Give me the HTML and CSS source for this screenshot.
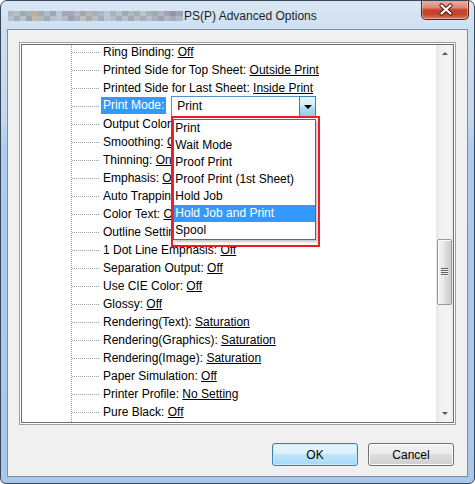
FILE: index.html
```html
<!DOCTYPE html>
<html lang="en">
<head>
    <meta charset="UTF-8">
    <title>PS(P) Advanced Options</title>
    <link rel="stylesheet" href="styles.css">
</head>
<body>
<div class="window">
    <div class="titlebar">
        <svg class="blur" width="175" height="10" viewBox="0 0 175 10" shape-rendering="crispEdges">
            <rect x="0" y="0" width="175" height="10" fill="#bcc7d3"/>
            <rect x="0" y="0" width="6" height="5" fill="#a9b6c6"/><rect x="6" y="0" width="6" height="5" fill="#b7bfc5"/><rect x="12" y="0" width="6" height="5" fill="#9ea9b4"/><rect x="18" y="0" width="6" height="5" fill="#aab2b8"/><rect x="24" y="0" width="6" height="5" fill="#b8b29c"/><rect x="30" y="0" width="6" height="5" fill="#a3acb6"/><rect x="36" y="0" width="6" height="5" fill="#b4bcc6"/><rect x="42" y="0" width="6" height="5" fill="#9ba6b2"/>
            <rect x="54" y="0" width="6" height="5" fill="#a2a7b4"/><rect x="60" y="0" width="6" height="5" fill="#a9a5b8"/><rect x="66" y="0" width="6" height="5" fill="#b3b9c2"/><rect x="72" y="0" width="6" height="5" fill="#9fa9b1"/><rect x="78" y="0" width="6" height="5" fill="#b5bab0"/><rect x="84" y="0" width="6" height="5" fill="#a6afba"/><rect x="90" y="0" width="6" height="5" fill="#b0b7c0"/>
            <rect x="102" y="0" width="6" height="5" fill="#a7b1bd"/><rect x="108" y="0" width="6" height="5" fill="#b9c0c7"/><rect x="114" y="0" width="6" height="5" fill="#9ca8b5"/><rect x="120" y="0" width="6" height="5" fill="#b3b9c0"/><rect x="126" y="0" width="6" height="5" fill="#a4adb9"/><rect x="132" y="0" width="6" height="5" fill="#bcc3ca"/><rect x="138" y="0" width="6" height="5" fill="#a8b0bc"/><rect x="144" y="0" width="6" height="5" fill="#9fa7b6"/><rect x="150" y="0" width="6" height="5" fill="#aeb5c2"/><rect x="156" y="0" width="6" height="5" fill="#a1a4b2"/><rect x="162" y="0" width="6" height="5" fill="#8f96a6"/><rect x="168" y="0" width="7" height="5" fill="#9ba3b2"/>
            <rect x="0" y="5" width="6" height="5" fill="#b4c0cd"/><rect x="6" y="5" width="6" height="5" fill="#a2adb8"/><rect x="12" y="5" width="6" height="5" fill="#b9c2c9"/><rect x="18" y="5" width="6" height="5" fill="#9aa3ad"/><rect x="24" y="5" width="6" height="5" fill="#c2bba4"/><rect x="30" y="5" width="6" height="5" fill="#b1b9c3"/><rect x="36" y="5" width="6" height="5" fill="#a1abb7"/><rect x="42" y="5" width="6" height="5" fill="#b8c0c9"/>
            <rect x="54" y="5" width="6" height="5" fill="#b4b9c4"/><rect x="60" y="5" width="6" height="5" fill="#9c9fb1"/><rect x="66" y="5" width="6" height="5" fill="#a6aeb8"/><rect x="72" y="5" width="6" height="5" fill="#b9c0c6"/><rect x="78" y="5" width="6" height="5" fill="#a8ae9f"/><rect x="84" y="5" width="6" height="5" fill="#b7bec7"/><rect x="90" y="5" width="6" height="5" fill="#a2abb6"/>
            <rect x="102" y="5" width="6" height="5" fill="#b6bfc9"/><rect x="108" y="5" width="6" height="5" fill="#a3adb9"/><rect x="114" y="5" width="6" height="5" fill="#b7bfc8"/><rect x="120" y="5" width="6" height="5" fill="#9fa8b3"/><rect x="126" y="5" width="6" height="5" fill="#b5bcc5"/><rect x="132" y="5" width="6" height="5" fill="#a5aeb9"/><rect x="138" y="5" width="6" height="5" fill="#b9bfc9"/><rect x="144" y="5" width="6" height="5" fill="#abb2bf"/><rect x="150" y="5" width="6" height="5" fill="#9da3b3"/><rect x="156" y="5" width="6" height="5" fill="#b1b6c2"/><rect x="162" y="5" width="6" height="5" fill="#a4aab8"/><rect x="168" y="5" width="7" height="5" fill="#b0b6c3"/>
        </svg>
        <span class="title">PS(P) Advanced Options</span>
        <div class="close">
            <svg width="48" height="19" viewBox="0 0 48 19">
                <path d="M19.5 5.5 L28.5 13.5 M28.5 5.5 L19.5 13.5" stroke="#4b1b12" stroke-width="4.2" stroke-linecap="round"/>
                <path d="M19.5 5.5 L28.5 13.5 M28.5 5.5 L19.5 13.5" stroke="#ffffff" stroke-width="2.2" stroke-linecap="round"/>
            </svg>
        </div>
    </div>
    <div class="client">
        <div class="treebox">
            <div class="tree-inner">
                <ul class="tree">
                    <li><span class="lbl">Ring Binding: <u>Off</u></span></li>
                    <li><span class="lbl">Printed Side for Top Sheet: <u>Outside Print</u></span></li>
                    <li><span class="lbl">Printed Side for Last Sheet: <u>Inside Print</u></span></li>
                    <li class="current">
                        <span class="lbl sel">Print Mode:</span>
                        <div class="combo">
                            <span class="combo-text">Print</span>
                            <div class="drop"><span class="arrow"></span></div>
                            <ul class="listbox">
                                <li>Print</li>
                                <li>Wait Mode</li>
                                <li>Proof Print</li>
                                <li>Proof Print (1st Sheet)</li>
                                <li>Hold Job</li>
                                <li class="hot">Hold Job and Print</li>
                                <li>Spool</li>
                            </ul>
                            <div class="mark"></div>
                        </div>
                    </li>
                    <li><span class="lbl">Output Color: <u>Auto Color</u></span></li>
                    <li><span class="lbl">Smoothing: <u>Off</u></span></li>
                    <li><span class="lbl">Thinning: <u>On</u></span></li>
                    <li><span class="lbl">Emphasis: <u>On</u></span></li>
                    <li><span class="lbl">Auto Trapping: <u>On</u></span></li>
                    <li><span class="lbl">Color Text: <u>Off</u></span></li>
                    <li><span class="lbl">Outline Setting: <u>Off</u></span></li>
                    <li><span class="lbl">1 Dot Line Emphasis: <u>Off</u></span></li>
                    <li><span class="lbl">Separation Output: <u>Off</u></span></li>
                    <li><span class="lbl">Use CIE Color: <u>Off</u></span></li>
                    <li><span class="lbl">Glossy: <u>Off</u></span></li>
                    <li><span class="lbl">Rendering(Text): <u>Saturation</u></span></li>
                    <li><span class="lbl">Rendering(Graphics): <u>Saturation</u></span></li>
                    <li><span class="lbl">Rendering(Image): <u>Saturation</u></span></li>
                    <li><span class="lbl">Paper Simulation: <u>Off</u></span></li>
                    <li><span class="lbl">Printer Profile: <u>No Setting</u></span></li>
                    <li><span class="lbl">Pure Black: <u>Off</u></span></li>
                </ul>
                <div class="scrollbar">
                    <div class="sb-btn"><span class="sb-up"></span></div>
                    <div class="sb-track">
                        <div class="thumb"><span class="grip"></span></div>
                    </div>
                    <div class="sb-btn"><span class="sb-down"></span></div>
                </div>
            </div>
        </div>
        <div class="buttons">
            <button class="btn ok">OK</button>
            <button class="btn">Cancel</button>
        </div>
    </div>
</div>
</body>
</html>
```

FILE: styles.css
```css
*{
    margin: 0;
    padding: 0;
    box-sizing: border-box;
    font-family: 'Liberation Sans', Arial, sans-serif;
}
body {
    width: 475px;
    height: 484px;
    background: #fff;
    font-size: 12px;
    color: #000;
}
.window {
    width: 475px;
    height: 484px;
    border: 1px solid #37475a;
    border-radius: 7px 7px 6px 6px;
    background: linear-gradient(to bottom, #dbe7f4 0, #cddff1 30px, #c3d8ee 120px, #aecbea 150px, #a9c7e8 100%);
    display: flex;
    flex-direction: column;
    overflow: hidden;
}
.titlebar {
    height: 28px;
    display: flex;
    align-items: center;
    flex-shrink: 0;
}
.blur {
    margin-left: 7px;
    margin-top: 1px;
    flex-shrink: 0;
}
.title {
    font-size: 12px;
    color: #1e1e1e;
    margin-left: 1px;
    margin-top: 1px;
}
.close {
    align-self: flex-start;
    margin-left: auto;
    margin-right: 5px;
    margin-top: -1px;
    width: 48px;
    height: 20px;
    border: 1px solid #5f2014;
    border-top: none;
    border-radius: 0 0 5px 5px;
    background: linear-gradient(to bottom, #eab3a6 0, #dc8a76 40%, #c5432b 52%, #c3442b 75%, #dc7f5f 100%);
    box-shadow: inset 0 0 0 1px rgba(255,255,255,0.35);
}
.close svg {
    display: block;
}
.client {
    margin: 0 6px;
    height: 448px;
    border: 1px solid #7b8ea5;
    background: #f0f0f0;
    padding: 12px 0 0 11px;
    display: flex;
    flex-direction: column;
}
.treebox {
    width: 437px;
    height: 383px;
    border: 1px solid #a0a0a0;
    padding: 1px;
    background: #fff;
}
.tree-inner {
    height: 100%;
    border: 1px solid #6e6e6e;
    display: flex;
    overflow: hidden;
}
.tree {
    list-style: none;
    flex: 1;
    margin-top: -2px;
    background-image: linear-gradient(to bottom, #a0a0a0 50%, transparent 50%);
    background-size: 1px 2px;
    background-position: 49px 0;
    background-repeat: repeat-y;
}
.tree > li {
    height: 18px;
    display: flex;
    align-items: center;
    padding-left: 50px;
    white-space: nowrap;
}
.tree > li::before {
    content: "";
    width: 27px;
    height: 1px;
    margin-right: 2px;
    flex-shrink: 0;
    background-image: linear-gradient(to right, #a0a0a0 50%, transparent 50%);
    background-size: 2px 1px;
}
.lbl {
    padding: 0 2px;
    line-height: 17px;
}
.lbl u {
    text-underline-offset: 1px;
}
.tree > li.current {
    align-items: flex-start;
}
.tree > li.current::before {
    margin-top: 9px;
}
.sel {
    background: #3399ff;
    color: #fff;
    height: 17px;
}
.combo {
    position: relative;
    margin-left: 5px;
    margin-top: -1px;
    width: 145px;
    height: 21px;
    border: 1px solid #5d8fc4;
    background: #fff;
    padding-left: 5px;
    line-height: 19px;
}
.drop {
    position: absolute;
    right: -1px;
    top: -1px;
    bottom: -1px;
    width: 17px;
    border: 1px solid #3c7fb1;
    background: linear-gradient(to bottom, #e6f5fd 0, #d3eefc 45%, #b0ddf8 55%, #8fcbee 100%);
    display: flex;
    align-items: center;
    justify-content: center;
}
.arrow {
    width: 0;
    height: 0;
    border-left: 4px solid transparent;
    border-right: 4px solid transparent;
    border-top: 4px solid #000;
    margin-top: 1px;
}
.listbox {
    position: absolute;
    left: 1px;
    top: 22px;
    width: 143px;
    list-style: none;
    background: #fff;
    border: 1px solid #646464;
    box-shadow: 2px 2px 2px rgba(0,0,0,0.22);
    z-index: 2;
}
.listbox li {
    height: 17px;
    line-height: 17px;
    padding-left: 1px;
    white-space: nowrap;
}
.listbox li.hot {
    background: #3399ff;
    color: #fff;
}
.mark {
    position: absolute;
    left: -1px;
    top: 19px;
    width: 149px;
    height: 131px;
    border: 2px solid #ee1c25;
    z-index: 3;
    pointer-events: none;
}
.scrollbar {
    width: 17px;
    flex-shrink: 0;
    display: flex;
    flex-direction: column;
    background: linear-gradient(to right, #e6e6e6 0, #f0f0f0 20%, #f4f4f4 80%, #e9e9e9 100%);
}
.sb-btn {
    height: 17px;
    display: flex;
    align-items: center;
    justify-content: center;
}
.sb-up {
    width: 0;
    height: 0;
    border-left: 3px solid transparent;
    border-right: 3px solid transparent;
    border-bottom: 3px solid #5a5a5a;
}
.sb-down {
    width: 0;
    height: 0;
    border-left: 3px solid transparent;
    border-right: 3px solid transparent;
    border-top: 3px solid #5a5a5a;
}
.sb-track {
    flex: 1;
    padding: 177px 1px 0 1px;
}
.thumb {
    height: 66px;
    border: 1px solid #979797;
    border-radius: 2px;
    background: linear-gradient(to right, #f4f4f4 0, #e9e9e9 45%, #dcdcdc 55%, #cdcdcd 100%);
    box-shadow: inset 1px 1px 0 #fcfcfc;
    display: flex;
    align-items: center;
    justify-content: center;
}
.grip {
    width: 7px;
    height: 8px;
    background: repeating-linear-gradient(to bottom, #5f5f5f 0, #5f5f5f 1px, #f4f4f4 1px, #f4f4f4 2px);
}
.buttons {
    display: flex;
    justify-content: flex-end;
    gap: 10px;
    margin-top: 18px;
    padding-right: 13px;
}
.btn {
    width: 86px;
    height: 23px;
    border: 1px solid #707070;
    border-radius: 3px;
    font-size: 12px;
    color: #000;
    background: linear-gradient(to bottom, #f2f2f2 0, #ebebeb 50%, #dddddd 50%, #cfcfcf 100%);
    box-shadow: inset 0 0 0 1px #fcfcfc;
}
.btn.ok {
    border-color: #3c7fb1;
    background: linear-gradient(to bottom, #eaf6fd 0, #d9f0fc 50%, #bee6fd 50%, #a7d9f5 100%);
    box-shadow: inset 0 0 0 1px #c8eafb;
}
```
